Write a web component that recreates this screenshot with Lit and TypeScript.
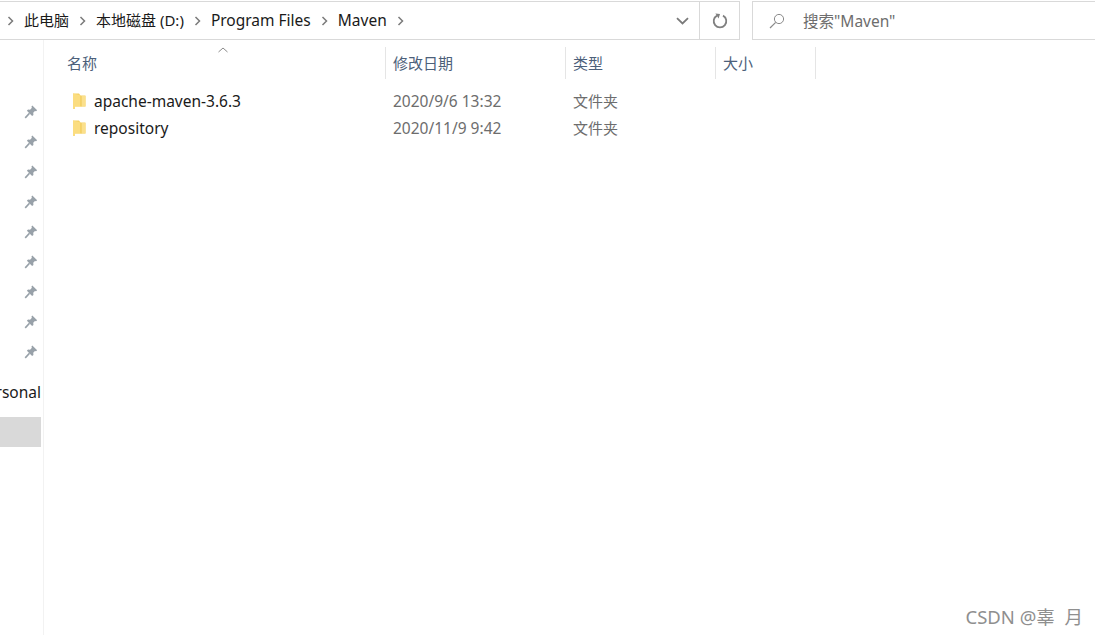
import { LitElement, html, css } from "lit";
import { customElement } from "lit/decorators.js";

const chevron = html`<svg class="chev" width="7" height="10" viewBox="0 0 7 10"><path d="M1.5 1 L5.5 5 L1.5 9" fill="none" stroke="#7a7a7a" stroke-width="1.5"/></svg>`;
const pin = html`<svg class="pin" width="14" height="14" viewBox="0 0 14 15"><path d="M8.4 .6 L13.6 5.6 L12.4 6.8 L11.2 6.4 L9.4 8.4 L9.6 10.6 L8.2 11.8 L2.6 6.2 L3.8 4.8 L6 5 L8 3 L7.4 1.8 Z" fill="#98a1a9"/><path d="M5.4 8.8 L.8 13.8" stroke="#98a1a9" stroke-width="1.8"/></svg>`;
const folder = html`<svg class="folder" width="14" height="18" viewBox="0 0 14 18"><path d="M1 1.5 L7 1.5 L8.5 3.5 L13.5 3.5 L13.5 14.5 L1 14.5 Z" fill="#f6d264"/><path d="M1 1.5 L8.6 3.6 L8.6 14.5 L3 14.5 L3 17 L1 17 Z" fill="#fbdd80"/><path d="M8.6 4 L9.6 4 L9.6 14.5 L8.6 14.5 Z" fill="#efc552"/><path d="M9.6 4 L13.5 4 L13.5 14.5 L9.6 14.5 Z" fill="#fbe08c"/></svg>`;

@customElement("app-root")
export class AppRoot extends LitElement {
  static styles = css`
    :host {
      display: flex;
      flex-direction: column;
      width: 1095px;
      height: 635px;
      overflow: hidden;
      position: relative;
      background: #fff;
      font-family: "Noto Sans", "Noto Sans CJK SC", sans-serif;
      font-size: 15.5px;
      color: #1a1a1a;
    }
    .toolbar {
      display: flex;
      gap: 12px;
      height: 39px;
      margin-top: 1px;
      flex: none;
    }
    .address {
      width: 740px;
      display: flex;
      align-items: center;
      box-sizing: border-box;
      border: 1px solid #d9d9d9;
      border-left: 0;
      padding-left: 7px;
    }
    .crumb { display: flex; align-items: center; flex: none; }
    .crumb span { padding: 0 10px 0 10px; line-height: 37px; white-space: nowrap; }
    .crumb .cjk { font-size: 15px; }
    .chev { flex: none; }
    .grow { flex: 1; }
    .dd {
      width: 39px;
      display: flex;
      align-items: center;
      justify-content: center;
      height: 100%;
      border-right: 1px solid #d9d9d9;
      box-sizing: border-box;
      padding-left: 5px;
    }
    .refresh { width: 39px; display: flex; align-items: center; justify-content: center; }
    .search {
      flex: 1;
      display: flex;
      align-items: center;
      box-sizing: border-box;
      border: 1px solid #d9d9d9;
      border-right: 0;
      padding-left: 16px;
      gap: 18px;
      color: #6d6d6d;
    }
    .body { flex: 1; display: flex; min-height: 0; }
    .side {
      width: 44px;
      flex: none;
      box-sizing: border-box;
      border-right: 1px solid #f2f2f2;
      padding-top: 57px;
      display: flex;
      flex-direction: column;
      align-items: stretch;
    }
    .pins { display: flex; flex-direction: column; padding-right: 5px; align-items: flex-end; }
    .pinrow { height: 30px; display: flex; align-items: center; }
    .pin { display: block; }
    .personal {
      margin-top: 10px;
      height: 30px;
      width: 41px;
      display: flex;
      justify-content: flex-end;
      align-items: center;
      overflow: hidden;
      white-space: nowrap;
    }
    .selected { margin-top: 10px; width: 41px; height: 30px; background: #d9d9d9; }
    .main { flex: 1; display: flex; flex-direction: column; padding-top: 7px; }
    .head { display: flex; height: 32px; color: #4c607a; }
    .col { box-sizing: border-box; display: flex; align-items: center; padding-left: 7px; border-right: 1px solid #e5e5e5; line-height: 32px; font-size: 15px; }
    .c1 { width: 342px; padding-left: 23px; position: relative; }
    .c2 { width: 180px; }
    .c3 { width: 150px; }
    .c4 { width: 100px; }
    .sort { position: absolute; left: 174px; top: 0; display: block; }
    .rows { padding-top: 8px; }
    .row { display: flex; height: 27px; align-items: center; }
    .cell { box-sizing: border-box; padding-left: 7px; white-space: nowrap; color: #6d6d6d; }
    .name { box-sizing: border-box; width: 342px; display: flex; align-items: center; padding-left: 28px; color: #1a1a1a; gap: 8px; }
    .date { width: 180px; }
    .kind { width: 150px; font-size: 15px; }
    .folder { display: block; flex: none; }
    .mark {
      position: absolute;
      right: 12px;
      bottom: 6px;
      color: #8f8f8f;
      font-size: 18.5px;
      white-space: pre;
    }
  `;

  render() {
    const crumbs = [
      ["此电脑", "cjk"],
      ["本地磁盘 (D:)", "cjk"],
      ["Program Files", ""],
      ["Maven", ""],
    ];
    const rows = [
      ["apache-maven-3.6.3", "2020/9/6 13:32"],
      ["repository", "2020/11/9 9:42"],
    ];
    return html`
      <div class="toolbar">
        <div class="address">
          ${chevron}
          ${crumbs.map((c) => html`<div class="crumb"><span class=${c[1]}>${c[0]}</span>${chevron}</div>`)}
          <div class="grow"></div>
          <div class="dd">
            <svg width="13" height="8" viewBox="0 0 13 8"><path d="M1 1.2 L6.5 6.5 L12 1.2" fill="none" stroke="#7a7a7a" stroke-width="1.8"/></svg>
          </div>
          <div class="refresh">
            <svg width="16" height="16" viewBox="0 0 16 16">
              <path d="M5 2.6 A6.3 6.3 0 1 0 11 2.6" fill="none" stroke="#808080" stroke-width="1.8"/>
              <path d="M3.4 .6 L8 1 L6.6 5.4 Z" fill="#808080"/>
            </svg>
          </div>
        </div>
        <div class="search">
          <svg width="16" height="16" viewBox="0 0 16 16">
            <circle cx="10" cy="6" r="4.6" fill="none" stroke="#8a8a8a" stroke-width="1"/>
            <path d="M6.7 9.3 L1 15" stroke="#8a8a8a" stroke-width="1.2"/>
          </svg>
          <span>搜索"Maven"</span>
        </div>
      </div>
      <div class="body">
        <div class="side">
          <div class="pins">
            ${Array.from({ length: 9 }, () => html`<div class="pinrow">${pin}</div>`)}
          </div>
          <div class="personal"><span>Personal</span></div>
          <div class="selected"></div>
        </div>
        <div class="main">
          <div class="head">
            <div class="col c1">名称
              <svg class="sort" width="10" height="6" viewBox="0 0 10 6"><path d="M.5 5 L5 1 L9.5 5" fill="none" stroke="#8a8a8a" stroke-width="1"/></svg>
            </div>
            <div class="col c2">修改日期</div>
            <div class="col c3">类型</div>
            <div class="col c4">大小</div>
          </div>
          <div class="rows">
            ${rows.map(
              (r) => html`<div class="row">
                <div class="name">${folder}<span>${r[0]}</span></div>
                <div class="cell date">${r[1]}</div>
                <div class="cell kind">文件夹</div>
              </div>`
            )}
          </div>
        </div>
      </div>
      <div class="mark">CSDN @辜  月</div>
    `;
  }
}
